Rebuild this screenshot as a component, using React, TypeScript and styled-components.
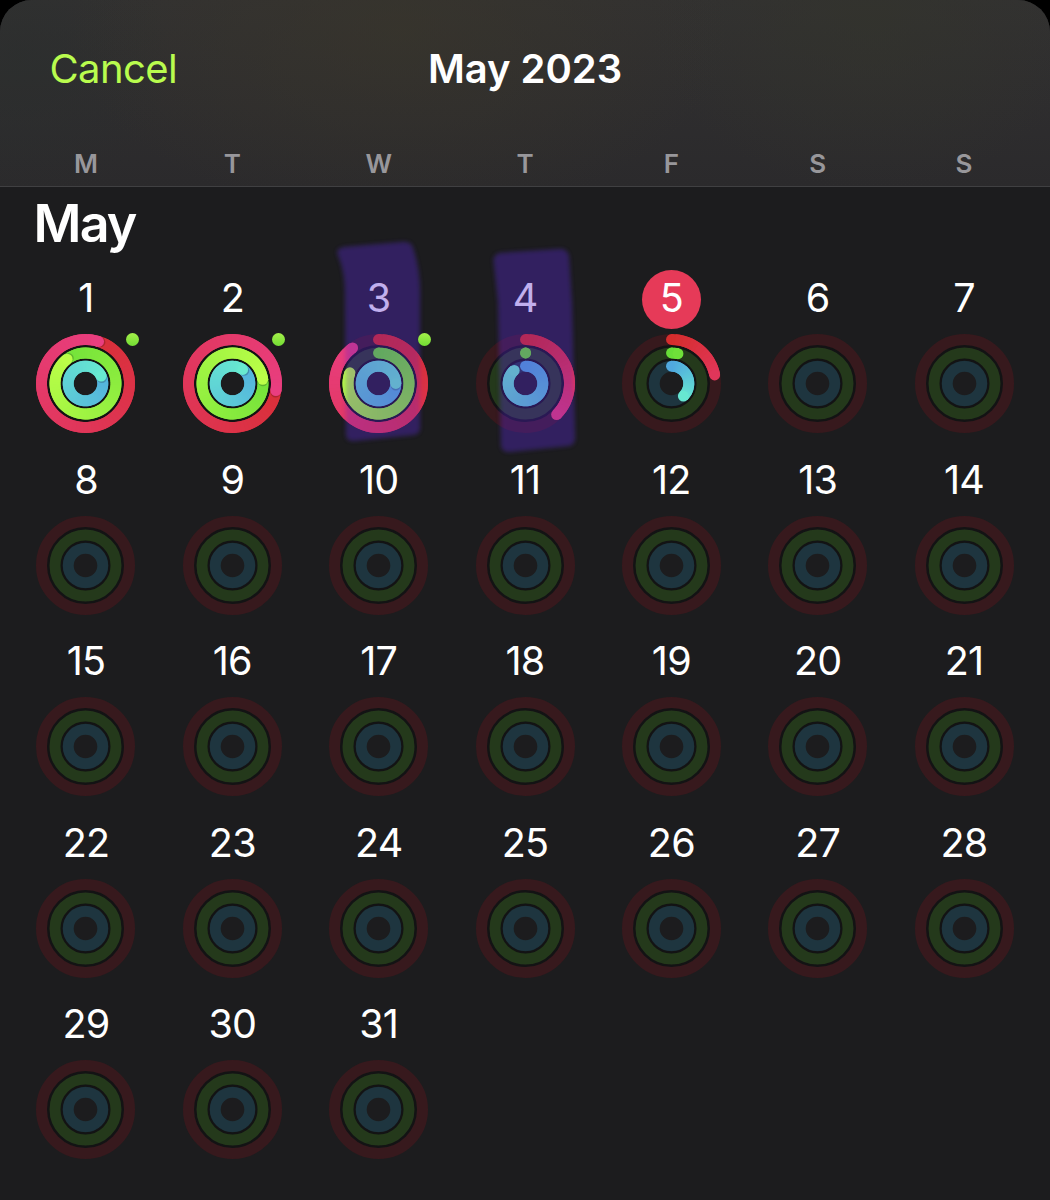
import React from "react";
import styled, { createGlobalStyle } from "styled-components";

const GlobalStyle = createGlobalStyle`
  * { box-sizing: border-box; }
  html, body { margin: 0; padding: 0; background: #000; }
`;

const Sheet = styled.main`
  width: 1050px;
  height: 1200px;
  overflow: hidden;
  border-radius: 32px 32px 0 0;
  background: #1c1c1e;
  color: #fff;
  font-family: Inter, "Liberation Sans", sans-serif;
`;

const Header = styled.header`
  height: 187px;
  display: flex;
  flex-direction: column;
  justify-content: space-between;
  border-bottom: 1px solid #404042;
  background:
    radial-gradient(ellipse 330px 190px at 400px 30px, rgba(58, 54, 42, 0.6), transparent),
    radial-gradient(ellipse 220px 170px at 870px 20px, rgba(51, 52, 44, 0.65), transparent),
    radial-gradient(ellipse 150px 150px at 20px 60px, rgba(42, 46, 45, 0.6), transparent),
    linear-gradient(#323131, #2b2a2c);
`;

const Toolbar = styled.div`
  display: grid;
  grid-template-columns: 1fr auto 1fr;
  align-items: center;
  height: 138px;
  padding: 0 49.5px;
`;

const CancelButton = styled.button`
  justify-self: start;
  border: 0;
  padding: 0;
  background: none;
  color: #b9fc4e;
  font: 400 40px/48px Inter, "Liberation Sans", sans-serif;
  letter-spacing: -0.6px;
`;

const Title = styled.h1`
  margin: 0;
  font-size: 40px;
  line-height: 48px;
  font-weight: 600;
  letter-spacing: -0.05px;
`;

const Weekdays = styled.div`
  display: grid;
  grid-template-columns: repeat(7, 1fr);
  padding: 0 12.8px;
  height: 44px;
  text-align: center;
  font-size: 26px;
  line-height: 44px;
  font-weight: 600;
  color: #98979b;
`;

const MonthName = styled.h2`
  margin: 0;
  height: 83px;
  padding: 5px 0 0 33.5px;
  font-size: 52px;
  line-height: 64px;
  font-weight: 600;
  letter-spacing: -1.8px;
`;

const Grid = styled.div`
  display: grid;
  grid-template-columns: repeat(7, 1fr);
  grid-auto-rows: 181.5px;
  padding: 0 12.8px;
`;

const DayCell = styled.div`
  position: relative;
  display: flex;
  flex-direction: column;
  align-items: center;
  gap: 4px;
`;

const DayNumber = styled.span<{ $today?: boolean }>`
  width: 59px;
  height: 59px;
  border-radius: 50%;
  background: ${(p) => (p.$today ? "#e63a58" : "transparent")};
  font-size: 39.5px;
  line-height: 56px;
  text-align: center;
  letter-spacing: -0.8px;
`;

const RingsSvg = styled.svg`
  position: relative;
  z-index: 1;
  display: block;
  width: 101px;
  height: 101px;
`;

const WorkoutDot = styled.i`
  position: absolute;
  z-index: 3;
  left: 113px;
  top: 62.5px;
  width: 13px;
  height: 13px;
  border-radius: 50%;
  background: linear-gradient(#a4f04a, #72dc34);
`;

const MarkerSvg = styled.svg<{ $above?: boolean }>`
  position: absolute;
  z-index: ${(p) => (p.$above ? 2 : 0)};
  left: 0;
  top: -40px;
  width: 146px;
  height: 240px;
  overflow: visible;
  pointer-events: none;
  fill: ${(p) => (p.$above ? "rgba(85, 30, 200, 0.28)" : "rgba(92, 75, 235, 0.13)")};
  filter: blur(2px);
`;

type RGB = [number, number, number];

interface RingStyle {
  radius: number;
  track: string;
  from: RGB;
  to: RGB;
}

const RINGS: RingStyle[] = [
  { radius: 44, track: "rgba(240, 10, 25, 0.13)", from: [214, 45, 45], to: [233, 62, 128] },
  { radius: 30.5, track: "rgba(86, 230, 16, 0.15)", from: [104, 222, 56], to: [188, 255, 72] },
  { radius: 17.3, track: "rgba(46, 190, 240, 0.155)", from: [80, 168, 224], to: [104, 234, 208] },
];

const GAP_RADII = [37.2, 23.9];

const C = 50.5;
const STROKE = 10.9;

const point = (r: number, turn: number) => {
  const a = turn * Math.PI * 2;
  return { x: C + r * Math.sin(a), y: C - r * Math.cos(a) };
};

const blend = (from: RGB, to: RGB, t: number) =>
  `rgb(${from.map((v, i) => Math.round(v + (to[i] - v) * t)).join(",")})`;

function Ring({ ring, value }: { ring: RingStyle; value: number }) {
  const { radius, from, to } = ring;
  // Past a full turn only the latest lap is visible, and it starts a little way into the gradient.
  const begin = Math.max(0, value - 1);
  const length = value - begin;
  const base = value > 1 ? 0.14 : 0;
  const span = Math.max(length, 0.4);
  const tone = (t: number) => blend(from, to, base + ((t - begin) / span) * (1 - base));
  const steps = Math.max(1, Math.ceil(length * 72));
  const start = point(radius, begin);
  const end = point(radius, value);
  const behind = point(radius, value + 0.9 / radius / Math.PI);
  return (
    <g>
      <circle cx={start.x} cy={start.y} r={STROKE / 2} fill={tone(begin)} />
      {Array.from({ length: steps }, (_, i) => {
        const t0 = begin + (length * i) / steps;
        const t1 = begin + (length * (i + 1)) / steps;
        const a = point(radius, t0);
        const b = point(radius, Math.min(value, t1 + 0.014));
        return (
          <path
            key={i}
            d={`M${a.x} ${a.y}A${radius} ${radius} 0 0 1 ${b.x} ${b.y}`}
            fill="none"
            stroke={tone(t0)}
            strokeWidth={STROKE}
          />
        );
      })}
      {value > 1 && (
        <circle cx={behind.x} cy={behind.y} r={STROKE / 2 - 0.3} fill="rgba(0,0,0,.2)" />
      )}
      <circle cx={end.x} cy={end.y} r={STROKE / 2} fill={tone(value)} />
    </g>
  );
}

function ActivityRings({ values }: { values?: number[] }) {
  return (
    <RingsSvg viewBox="0 0 101 101">
      {GAP_RADII.map((r) => (
        <circle key={r} cx={C} cy={C} r={r} fill="none" stroke="rgba(0,0,0,.3)" strokeWidth={2.6} />
      ))}
      {RINGS.map((ring, i) => (
        <g key={ring.radius}>
          <circle cx={C} cy={C} r={ring.radius} fill="none" stroke={ring.track} strokeWidth={11} />
          {values && <Ring ring={ring} value={values[i]} />}
        </g>
      ))}
    </RingsSvg>
  );
}

interface DayInfo {
  values: number[];
  workout?: boolean;
  marker?: string;
}

const ACTIVITY: Record<number, DayInfo> = {
  1: { values: [1.048, 1.897, 1.18], workout: true },
  2: { values: [1.276, 1.228, 1.1], workout: true },
  3: {
    values: [0.9, 0.807, 1.25],
    workout: true,
    marker:
      "M33 25Q30 19 39 17L98 12Q106 11 108 18Q116 42 115 70L115 198Q115 204 108 205L48 211Q41 211 41 204L40 62Q40 42 33 25Z",
  },
  4: {
    values: [0.375, 0.001, 0.887],
    marker:
      "M42 34Q40 25 48 23L108 19Q116 19 117 27L120 74L123 208Q123 215 116 216L57 222Q49 222 49 215L46 72Z",
  },
  5: { values: [0.219, 0.034, 0.38] },
};

const WEEKDAYS = ["M", "T", "W", "T", "F", "S", "S"];
const TODAY = 5;

function Day({ day }: { day: number }) {
  const info = ACTIVITY[day];
  return (
    <DayCell>
      <DayNumber $today={day === TODAY}>{day}</DayNumber>
      {info?.marker && (
        <MarkerSvg viewBox="0 0 146 240">
          <path d={info.marker} />
        </MarkerSvg>
      )}
      <ActivityRings values={info?.values} />
      {info?.marker && (
        <MarkerSvg $above viewBox="0 0 146 240">
          <path d={info.marker} />
        </MarkerSvg>
      )}
      {info?.workout && <WorkoutDot />}
    </DayCell>
  );
}

export default function App() {
  return (
    <>
      <GlobalStyle />
      <Sheet>
        <Header>
          <Toolbar>
            <CancelButton>Cancel</CancelButton>
            <Title>May 2023</Title>
          </Toolbar>
          <Weekdays>
            {WEEKDAYS.map((name, i) => (
              <span key={i}>{name}</span>
            ))}
          </Weekdays>
        </Header>
        <MonthName>May</MonthName>
        <Grid>
          {Array.from({ length: 31 }, (_, i) => (
            <Day key={i} day={i + 1} />
          ))}
        </Grid>
      </Sheet>
    </>
  );
}
